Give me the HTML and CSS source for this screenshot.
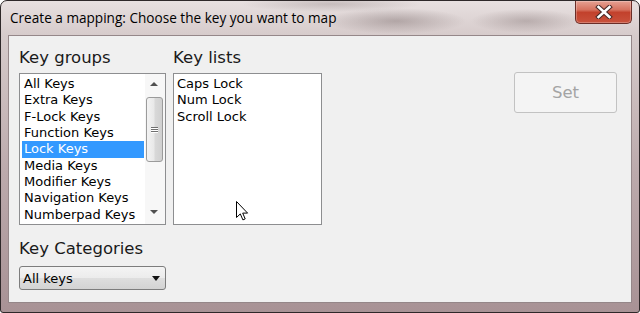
FILE: index.html
```html
<!DOCTYPE html>
<html>
<head>
<meta charset="utf-8">
<link rel="stylesheet" href="styles.css">
</head>
<body>
<div class="window">
  <div class="titlebar">
    <div class="title">Create a mapping: Choose the key you want to map</div>
    <div class="close">
      <svg width="18" height="14" viewBox="0 0 18 14">
        <path d="M3.5 2 L14.5 12 M14.5 2 L3.5 12" stroke="#4a2a28" stroke-width="4.6" stroke-linecap="square" fill="none"/>
        <path d="M3.5 2 L14.5 12 M14.5 2 L3.5 12" stroke="#ffffff" stroke-width="2.6" stroke-linecap="square" fill="none"/>
      </svg>
    </div>
  </div>
  <div class="client">
    <div class="row">
      <div class="col col-groups">
        <div class="label">Key groups</div>
        <div class="listbox">
          <div class="items">
            <div class="item">All Keys</div>
            <div class="item">Extra Keys</div>
            <div class="item">F-Lock Keys</div>
            <div class="item">Function Keys</div>
            <div class="item sel">Lock Keys</div>
            <div class="item">Media Keys</div>
            <div class="item">Modifier Keys</div>
            <div class="item">Navigation Keys</div>
            <div class="item">Numberpad Keys</div>
          </div>
          <div class="scroll">
            <div class="arrow-btn up"><span class="tri-up"></span></div>
            <div class="thumb"><span class="grip"></span><span class="grip"></span><span class="grip"></span></div>
            <div class="track"></div>
            <div class="arrow-btn down"><span class="tri-down"></span></div>
          </div>
        </div>
        <div class="label label-cat">Key Categories</div>
        <div class="combo">
          <span class="combo-text">All keys</span>
          <span class="combo-arrow"></span>
        </div>
      </div>
      <div class="col col-lists">
        <div class="label">Key lists</div>
        <div class="listbox">
          <div class="items items-plain">
            <div class="item">Caps Lock</div>
            <div class="item">Num Lock</div>
            <div class="item">Scroll Lock</div>
          </div>
        </div>
      </div>
      <div class="set-btn">Set</div>
    </div>
  </div>
  <svg class="cursor" width="13" height="20" viewBox="0 0 13 20">
    <path d="M0.5 0.5 L0.5 16.5 L4.3 12.9 L6.9 18.9 L9.2 17.9 L6.7 12.1 L11.6 12.1 Z" fill="#ffffff" stroke="#000000" stroke-width="1" stroke-linejoin="miter"/>
  </svg>
</div>
</body>
</html>
```

FILE: styles.css
```css
* { box-sizing: border-box; }
html, body { margin: 0; padding: 0; background: #ffffff; }
body {
  width: 640px;
  height: 313px;
  overflow: hidden;
  font-family: "DejaVu Sans", Verdana, sans-serif;
}
.window {
  position: relative;
  width: 640px;
  height: 313px;
  border: 1px solid #2e2829;
  border-radius: 7px 7px 3px 3px;
  overflow: hidden;
  display: flex;
  flex-direction: column;
  background:
    radial-gradient(ellipse 70px 13px at 395px 20px, rgba(125,110,110,0.45), rgba(125,110,110,0)),
    radial-gradient(ellipse 55px 12px at 525px 20px, rgba(130,115,115,0.40), rgba(130,115,115,0)),
    radial-gradient(ellipse 90px 8px at 330px 3px, rgba(140,125,125,0.35), rgba(140,125,125,0)),
    linear-gradient(180deg, #e7e0e0 0, #d6cbcb 34px, #bcaaac 55%, #a89295 100%);
}
.titlebar {
  flex: none;
  height: 34px;
  display: flex;
  justify-content: space-between;
  align-items: flex-start;
}
.title {
  font-family: "Open Sans", "Noto Sans", sans-serif;
  font-size: 13.6px;
  line-height: 20px;
  padding: 7px 0 0 9px;
  color: #000000;
  white-space: nowrap;
}
.close {
  width: 57px;
  height: 23px;
  margin-right: 7px;
  border: 1px solid #6a2d27;
  border-top: none;
  border-radius: 0 0 5px 5px;
  background: linear-gradient(180deg, #e6a193 0, #d6725f 40%, #c2412c 52%, #c9523c 100%);
  display: flex;
  align-items: center;
  justify-content: center;
  box-shadow: inset 0 0 0 1px rgba(255,255,255,0.25);
}
.close svg { display: block; }
.client {
  flex: none;
  height: 268px;
  margin: 0 7px;
  background: #f0f0f0;
  border: 1px solid #958789;
  padding: 12px 14px 0 10px;
}
.row {
  display: flex;
  align-items: flex-start;
  gap: 7px;
}
.col { display: flex; flex-direction: column; }
.col-groups { width: 147px; }
.col-lists { width: 149px; }
.label {
  font-size: 16.5px;
  line-height: 20px;
  height: 20px;
  margin-bottom: 5px;
  color: #1a1a1a;
  white-space: nowrap;
}
.label-cat { margin-top: 14px; margin-bottom: 7px; }
.listbox {
  height: 152px;
  border: 1px solid #8d8e90;
  background: #ffffff;
  display: flex;
}
.items {
  flex: 1;
  padding: 2px 0 0 2px;
  font-size: 13px;
  line-height: 16.33px;
}
.items-plain { padding-left: 1px; }
.item {
  padding-left: 2px;
  white-space: nowrap;
  color: #000000;
}
.item.sel { background: #3399ff; color: #ffffff; }
.scroll {
  width: 20px;
  margin-left: 1px;
  display: flex;
  flex-direction: column;
  background: #f7f7f7;
}
.arrow-btn {
  height: 20px;
  display: flex;
  align-items: center;
  justify-content: center;
  padding-right: 2px;
}
.arrow-btn.down { height: 18px; margin-bottom: 3px; }
.tri-up {
  width: 0; height: 0;
  border-left: 4px solid transparent;
  border-right: 4px solid transparent;
  border-bottom: 4px solid #505050;
}
.tri-down {
  width: 0; height: 0;
  border-left: 4px solid transparent;
  border-right: 4px solid transparent;
  border-top: 4px solid #505050;
}
.thumb {
  margin-top: 3px;
  margin-left: 1px;
  width: 17px;
  height: 65px;
  border: 1px solid #9b9b9b;
  border-radius: 3px;
  background: linear-gradient(90deg, #f3f3f3 0, #e9e9e9 45%, #d8d8d8 55%, #d0d0d0 100%);
  display: flex;
  flex-direction: column;
  align-items: center;
  justify-content: center;
  gap: 1px;
}
.grip {
  display: block;
  width: 7px;
  height: 1px;
  background: #6f6f6f;
  box-shadow: 0 1px 0 #ffffff;
}
.track { flex: 1; }
.combo {
  height: 24px;
  border: 1px solid #7d7d7d;
  border-radius: 3px;
  background: linear-gradient(180deg, #f4f4f4 0, #ececec 48%, #dedede 52%, #d3d3d3 100%);
  display: flex;
  align-items: center;
  justify-content: space-between;
  padding: 1px 5px 0 3px;
}
.combo-text {
  font-size: 13px;
  line-height: 20px;
  color: #000000;
}
.combo-arrow {
  width: 0; height: 0;
  border-left: 4px solid transparent;
  border-right: 4px solid transparent;
  border-top: 5px solid #111111;
  margin-top: -1px;
}
.set-btn {
  margin-left: auto;
  margin-top: 24px;
  width: 103px;
  height: 41px;
  border: 1px solid #c2c2c2;
  border-radius: 3px;
  background: #f4f4f4;
  color: #a4a4a4;
  font-size: 16.5px;
  display: flex;
  align-items: center;
  justify-content: center;
}
.cursor {
  position: absolute;
  left: 235px;
  top: 200px;
}
```
